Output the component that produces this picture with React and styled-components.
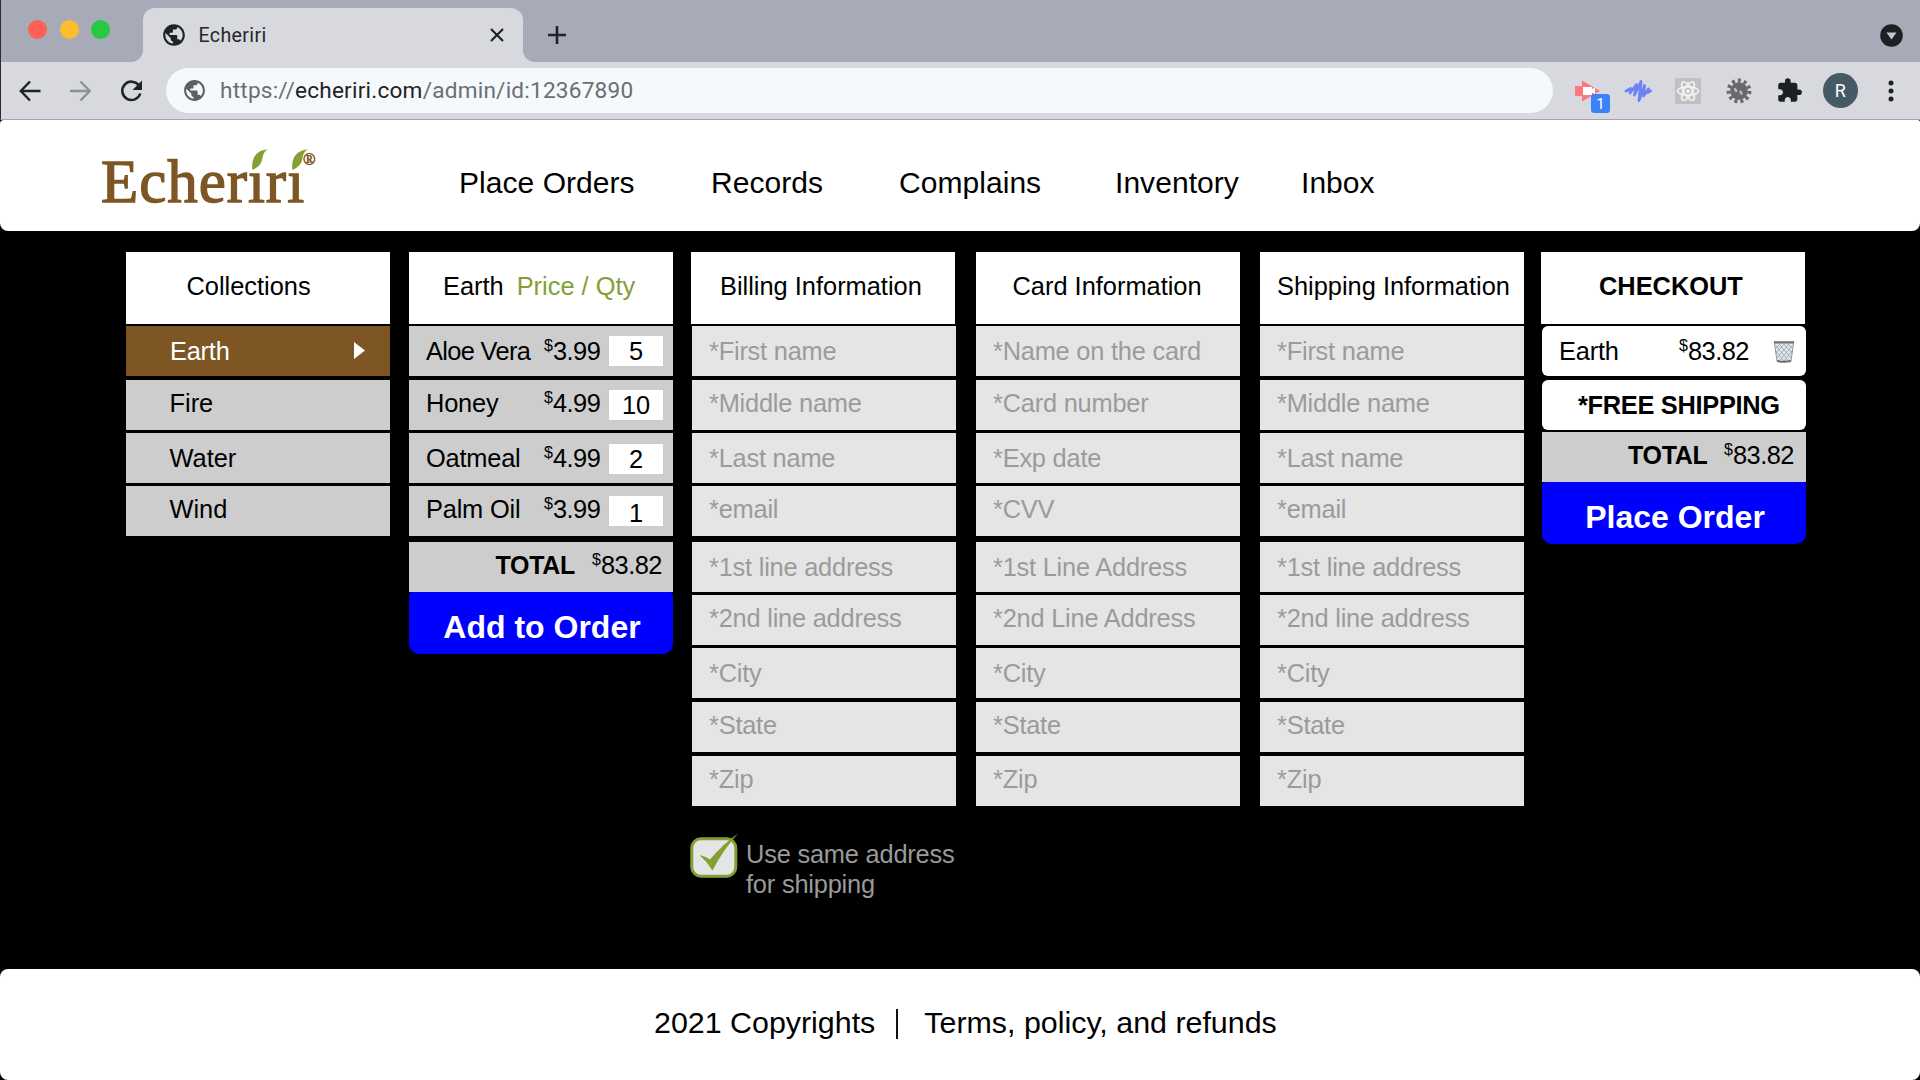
import React from "react";
import styled, { createGlobalStyle } from "styled-components";
import { MdPublic, MdExtension } from "react-icons/md";

const Global = createGlobalStyle`
  *, *::before, *::after { box-sizing: border-box; }
  html, body { margin: 0; background: #000; }
  body { font-family: "Liberation Sans", Arial, sans-serif; color: #000; overflow: hidden; }
`;

const Page = styled.div`
  width: 1920px;
  height: 1080px;
  display: flex;
  flex-direction: column;
  background: #000;
`;

/* Browser window */

const Browser = styled.header`
  flex: none;
  height: 120px;
  display: flex;
  flex-direction: column;
  font-family: Roboto, "Liberation Sans", sans-serif;
  background: #d7d9de;
  border-left: 1px solid #2b2c33;
  border-bottom: 1px solid #a3a5a9;
`;

const TabBar = styled.div`
  height: 62px;
  display: flex;
  align-items: flex-end;
  background: #a7aab7;
  padding: 0 17px 0 27px;
`;

const Lights = styled.div`
  display: flex;
  gap: 12.5px;
  width: 114.5px;
  padding-bottom: 23px;
`;

const Light = styled.span`
  width: 19px;
  height: 19px;
  border-radius: 50%;
  background: ${(p) => p.$color};
`;

const Tab = styled.div`
  position: relative;
  width: 380px;
  height: 54px;
  display: flex;
  align-items: center;
  gap: 12px;
  padding: 0 19px 0 18px;
  background: #d7d9de;
  border-radius: 12px 12px 0 0;
  &::before, &::after {
    content: "";
    position: absolute;
    bottom: 0;
    width: 12px;
    height: 12px;
  }
  &::before {
    left: -12px;
    background: radial-gradient(circle at 0 0, #a7aab7 11.5px, #d7d9de 12.5px);
  }
  &::after {
    right: -12px;
    background: radial-gradient(circle at 100% 0, #a7aab7 11.5px, #d7d9de 12.5px);
  }
`;

const TabTitle = styled.span`
  flex: 1;
  font-size: 19.6px;
  letter-spacing: 0.35px;
  color: #24272b;
`;

const NewTab = styled.div`
  height: 54px;
  margin-left: 24.5px;
  display: flex;
  align-items: center;
`;

const TabMenu = styled.div`
  height: 54px;
  margin-left: auto;
  display: flex;
  align-items: center;
`;

const Toolbar = styled.div`
  height: 57px;
  display: flex;
  align-items: center;
  padding-left: 17px;
`;

const NavButtons = styled.div`
  display: flex;
  gap: 26px;
  width: 148px;
`;

const Address = styled.div`
  flex: none;
  width: 1387px;
  height: 45px;
  display: flex;
  align-items: center;
  gap: 13px;
  padding-left: 16px;
  border-radius: 23px;
  background: #f5f9fc;
  color: #6a6e73;
`;

const Url = styled.span`
  font-size: 22.6px;
  letter-spacing: 0.22px;
  b { font-weight: 400; color: #1f2226; }
`;

const Extensions = styled.div`
  flex: 1;
  display: flex;
  align-items: center;
  padding-left: 9px;
`;

const Slot = styled.div`
  position: relative;
  flex: none;
  width: 50.6px;
  height: 40px;
  display: flex;
  align-items: center;
  justify-content: center;
`;

const Badge = styled.span`
  position: absolute;
  left: 29px;
  top: 23px;
  width: 19px;
  height: 19px;
  border-radius: 3px;
  background: #3b82f6;
  color: #fff;
  font-size: 15px;
  line-height: 20px;
  text-align: center;
`;

const Avatar = styled.span`
  width: 35px;
  height: 35px;
  border-radius: 50%;
  background: #455a64;
  color: #fff;
  font-size: 18px;
  line-height: 36px;
  text-align: center;
`;

/* Site header */

const SiteHeader = styled.div`
  flex: none;
  height: 111px;
  display: flex;
  background: #fff;
  border-radius: 4px 2px 8px 8px;
  padding: 0 0 0 101px;
`;

const Logo = styled.div`
  position: relative;
  width: 358px;
  padding-top: 27px;
  font-family: "Liberation Serif", "Times New Roman", serif;
  font-size: 61px;
  line-height: 70px;
  letter-spacing: 0.95px;
  color: #7e5624;
  -webkit-text-stroke: 1.3px #7e5624;
`;

const Leaf = styled.svg`
  position: absolute;
  left: ${(p) => p.$x}px;
  top: 29px;
`;

const Registered = styled.span`
  position: absolute;
  left: 202px;
  top: 31px;
  font-size: 16.5px;
  line-height: 18px;
  letter-spacing: 0;
  -webkit-text-stroke: 0.6px #7e5624;
`;

const Nav = styled.nav`
  display: flex;
  padding-top: 45px;
`;

const NavItem = styled.a`
  width: ${(p) => p.$w}px;
  font-size: 30px;
  line-height: 36px;
  letter-spacing: 0.05px;
  white-space: nowrap;
`;

/* Columns */

const Main = styled.main`
  flex: 1;
  display: flex;
  align-items: flex-start;
  padding: 21px 0 0 126px;
`;

const Column = styled.section`
  flex: none;
  width: 264px;
  margin-right: ${(p) => p.$gap || 0}px;
  display: flex;
  flex-direction: column;
  font-size: 25.4px;
  line-height: 30px;
  white-space: nowrap;
`;

const Head = styled.h2`
  margin: 0 ${(p) => p.$out || 0}px 2px -${(p) => p.$out || 0}px;
  height: 72px;
  padding: 19px 0 0 ${(p) => p.$x}px;
  background: #fff;
  font-size: 25.4px;
  line-height: 30px;
  font-weight: ${(p) => (p.$bold ? 700 : 400)};
  span { color: #84a034; margin-left: 13px; }
`;

const Row = styled.div`
  display: flex;
  align-items: flex-start;
  height: 50px;
  margin-bottom: ${(p) => p.$after ?? 3}px;
  padding: ${(p) => p.$drop || 10}px 0 0 ${(p) => p.$x || 17}px;
  background: ${(p) => p.$bg || "#cdcdcd"};
  color: ${(p) => p.$color || "#000"};
  border-radius: ${(p) => p.$round || 0}px;
  letter-spacing: ${(p) => p.$ls ?? -0.22}px;
  b { padding-top: 1px; }
`;

const Arrow = styled.svg`
  margin: 6px 25px 0 auto;
`;

const Name = styled.span`
  width: ${(p) => p.$w || 118}px;
  letter-spacing: ${(p) => p.$ls ?? -0.2}px;
`;

const Price = styled.span`
  display: flex;
  width: ${(p) => p.$w || 65}px;
  letter-spacing: -0.5px;
  sup {
    font-size: 16px;
    line-height: 20px;
    letter-spacing: 0;
  }
`;

const Qty = styled.span`
  width: 54px;
  height: 30px;
  margin-top: ${(p) => p.$top}px;
  padding-top: ${(p) => p.$pad}px;
  background: #fff;
  text-align: center;
`;

const Total = styled.strong`
  font-size: 25px;
  letter-spacing: -0.3px;
  width: ${(p) => p.$w}px;
`;

const Action = styled.button`
  height: 62px;
  border: 0;
  padding: 8px 0 0 2px;
  margin: 0;
  border-radius: 4px 4px 10px 10px;
  background: #0000fe;
  color: #fff;
  font: 700 32px/36px "Liberation Sans", Arial, sans-serif;
`;

const SameAddress = styled.label`
  display: flex;
  gap: 7px;
  margin: 26px 0 0 -2px;
  color: #9a9a9a;
  line-height: 30.4px;
  letter-spacing: -0.2px;
  svg { flex: none; }
  span { padding-top: 7px; }
`;

const Footer = styled.footer`
  flex: none;
  height: 111px;
  display: flex;
  padding: 35px 0 0 654px;
  background: #fff;
  border-radius: 8px;
  font-size: 30.4px;
  line-height: 36px;
`;

const Divider = styled.span`
  width: 2px;
  height: 30px;
  margin: 5px 26px 0 21px;
  background: #111;
`;

const TrashBox = styled.svg`
  margin-top: 3px;
`;

const leafPath = "M0.4 21 C-0.8 11 2.5 1.5 15.8 0.2 C11.8 2.6 11.2 5.5 10.2 10.5 C9.3 15 6 18.5 0.4 21 Z";

const items = [
  { name: "Aloe Vera", price: "3.99", qty: 5, drop: 10, top: 0, pad: 0, after: 4, ls: -0.65 },
  { name: "Honey", price: "4.99", qty: 10, drop: 8, top: 2, pad: 0, after: 3 },
  { name: "Oatmeal", price: "4.99", qty: 2, drop: 10, top: 1, pad: 0, after: 3 },
  { name: "Palm Oil", price: "3.99", qty: 1, drop: 8, top: 2, pad: 2, after: 6 },
];

const rowDrops = [10, 8, 10, 8, 10, 8, 10, 8, 8];
const rowGaps = [4, 3, 3, 6, 3, 3, 4, 4, 0];

const person = ["First name", "Middle name", "Last name", "email", "1st line address", "2nd line address", "City", "State", "Zip"];
const card = ["Name on the card", "Card number", "Exp date", "CVV", "1st Line Address", "2nd Line Address", "City", "State", "Zip"];

const Fields = ({ labels }) =>
  labels.map((label, i) => (
    <Row key={label} $bg="#e5e5e5" $color="#9b9b9b" $drop={rowDrops[i]} $after={rowGaps[i]}>
      *{label}
    </Row>
  ));

const Amount = ({ value, w }) => (
  <Price $w={w}>
    <sup>$</sup>
    {value}
  </Price>
);

const TrashIcon = () => (
  <TrashBox width="24" height="24" viewBox="0 0 24 24" fill="none">
    <path d="M2.5 4 L5 22 Q12 23.5 19 22 L21.5 4 Z" fill="#e3e8eb" stroke="#8b969d" strokeWidth="1" />
    <path d="M4 7 L17 22 M7 5 L19 19 M12 5 L20 14 M16 5 L21 10 M3.5 12 L12 22 M20 7 L7 22 M17 5 L5 19 M12 5 L4 14 M8 5 L3 10 M20 12 L12 22" stroke="#93a0a9" strokeWidth="0.8" />
    <path d="M1.8 3.2 H22.2 M5 22 Q12 23.5 19 22" stroke="#66717a" strokeWidth="2" />
  </TrashBox>
);

export default function App() {
  return (
    <Page>
      <Global />
      <Browser>
        <TabBar>
          <Lights>
            <Light $color="#ff5f57" />
            <Light $color="#febc2e" />
            <Light $color="#28c840" />
          </Lights>
          <Tab>
            <MdPublic size={26} color="#1f2226" />
            <TabTitle>Echeriri</TabTitle>
            <svg width="14" height="14" viewBox="0 0 14 14" stroke="#1f2226" strokeWidth="2.2">
              <path d="M1 1 L13 13 M13 1 L1 13" />
            </svg>
          </Tab>
          <NewTab>
            <svg width="20" height="20" viewBox="0 0 20 20" stroke="#1f2226" strokeWidth="2.6">
              <path d="M10 1 V19 M1 10 H19" />
            </svg>
          </NewTab>
          <TabMenu>
            <svg width="23" height="23" viewBox="0 0 23 23">
              <circle cx="11.5" cy="11.5" r="11.3" fill="#1d2023" />
              <path d="M6.5 8.5 H16.5 L11.5 15.5 Z" fill="#c3c5ce" />
            </svg>
          </TabMenu>
        </TabBar>
        <Toolbar>
          <NavButtons>
            <svg width="24" height="24" viewBox="0 0 24 24" fill="none" stroke="#1f2226" strokeWidth="2.4">
              <path d="M22.5 12 H3 M12 2.5 L2.8 12 L12 21.5" />
            </svg>
            <svg width="24" height="24" viewBox="0 0 24 24" fill="none" stroke="#8d9095" strokeWidth="2.4">
              <path d="M2 12 H21.5 M12.5 2.5 L21.7 12 L12.5 21.5" />
            </svg>
            <svg width="26" height="24" viewBox="0 0 26 24" fill="none">
              <path d="M21 6.5 A9.2 9.2 0 1 0 22.3 14.5" stroke="#1f2226" strokeWidth="2.5" />
              <path d="M24 1.5 V11 H14.5 Z" fill="#1f2226" />
            </svg>
          </NavButtons>
          <Address>
            <MdPublic size={25} color="#5b6066" />
            <Url>
              https://<b>echeriri.com</b>/admin/id:12367890
            </Url>
          </Address>
          <Extensions>
            <Slot>
              <svg width="26" height="22" viewBox="0 0 26 22">
                <path d="M1 6 H8 V0.5 L26 11 L8 21.5 V16 H1 Z" fill="#f9797c" />
                <path d="M9 7 H18 V9 L21 7.5 V14 L18 12.5 V15 H9 Z" fill="#fff" />
              </svg>
              <Badge>1</Badge>
            </Slot>
            <Slot>
              <svg width="28" height="24" viewBox="0 0 28 24" fill="none" stroke="#6b83f5" strokeWidth="2.8" strokeLinecap="round" strokeLinejoin="round">
                <path d="M2 12 L6.5 9.5 L6 14 L12.5 5.5 L10.5 16 L17 2.5 L15 21.5 L20.5 6.5 L19.5 17 L24.5 10 L23.5 13.5 L26.5 12" />
              </svg>
            </Slot>
            <Slot>
              <svg width="26" height="26" viewBox="0 0 26 26" fill="none" stroke="#f2f2f2" strokeWidth="1.7">
                <rect width="26" height="26" fill="#bfc0c1" stroke="none" />
                <ellipse cx="13" cy="13" rx="10.4" ry="4.2" />
                <ellipse cx="13" cy="13" rx="10.4" ry="4.2" transform="rotate(60 13 13)" />
                <ellipse cx="13" cy="13" rx="10.4" ry="4.2" transform="rotate(120 13 13)" />
                <circle cx="13" cy="13" r="2" fill="#f2f2f2" stroke="none" />
              </svg>
            </Slot>
            <Slot>
              <svg width="26" height="26" viewBox="0 0 26 26">
                <circle cx="13" cy="13" r="8.8" fill="#68696b" />
                <circle cx="13" cy="13" r="10.4" fill="none" stroke="#68696b" strokeWidth="4" strokeDasharray="3 2.94" />
                <ellipse cx="9.6" cy="12" rx="1.3" ry="2.4" fill="#b9bbbf" transform="rotate(-30 9.6 12)" />
                <ellipse cx="15" cy="14.6" rx="1.3" ry="2.4" fill="#b9bbbf" transform="rotate(-30 15 14.6)" />
              </svg>
            </Slot>
            <Slot>
              <MdExtension size={27} color="#1d2023" />
            </Slot>
            <Slot>
              <Avatar>R</Avatar>
            </Slot>
            <Slot>
              <svg width="6" height="22" viewBox="0 0 6 22" fill="#1d2023">
                <circle cx="3" cy="3" r="2.5" />
                <circle cx="3" cy="11" r="2.5" />
                <circle cx="3" cy="19" r="2.5" />
              </svg>
            </Slot>
          </Extensions>
        </Toolbar>
      </Browser>

      <SiteHeader>
        <Logo>
          Echerırı
          <Leaf $x={151} width="16" height="22" viewBox="0 0 16 22">
            <path d={leafPath} fill="#84a034" />
          </Leaf>
          <Leaf $x={191} width="16" height="22" viewBox="0 0 16 22">
            <path d={leafPath} fill="#84a034" />
          </Leaf>
          <Registered>®</Registered>
        </Logo>
        <Nav>
          <NavItem $w={252}>Place Orders</NavItem>
          <NavItem $w={188}>Records</NavItem>
          <NavItem $w={216}>Complains</NavItem>
          <NavItem $w={186}>Inventory</NavItem>
          <NavItem $w={100}>Inbox</NavItem>
        </Nav>
      </SiteHeader>

      <Main>
        <Column $gap={19}>
          <Head $x={60.5}>Collections</Head>
          <Row $x={44} $bg="#7e5624" $color="#fff" $after={4}>
            Earth
            <Arrow width="11" height="17" viewBox="0 0 11 17">
              <path d="M0 0 L11 8.5 L0 17 Z" fill="#fff" />
            </Arrow>
          </Row>
          <Row $x={43.5} $drop={8} $ls={0}>Fire</Row>
          <Row $x={43.5} $ls={0}>Water</Row>
          <Row $x={43.5} $drop={8} $ls={0}>Wind</Row>
        </Column>

        <Column $gap={19}>
          <Head $x={34}>
            Earth<span>Price / Qty</span>
          </Head>
          {items.map((it) => (
            <Row key={it.name} $drop={it.drop} $after={it.after}>
              <Name $ls={it.ls}>{it.name}</Name>
              <Amount value={it.price} />
              <Qty $top={it.top} $pad={it.pad}>{it.qty}</Qty>
            </Row>
          ))}
          <Row $x={86.5} $drop={8} $after={0}>
            <Total $w={96.5}>TOTAL</Total>
            <Amount value="83.82" w={80} />
          </Row>
          <Action>Add to Order</Action>
        </Column>

        <Column $gap={20}>
          <Head $x={29} $out={1}>Billing Information</Head>
          <Fields labels={person} />
          <SameAddress>
            <svg width="49" height="48" viewBox="0 0 49 48">
              <rect x="1.8" y="6.8" width="44" height="37.4" rx="9" fill="#e5e5e5" stroke="#84a034" strokeWidth="3" />
              <path d="M9.5 23 Q15.5 24 20 27.5 Q33 12 48 1.5 Q33 18 22.5 38.5 Q17 29.5 9.5 23 Z" fill="#84a034" />
            </svg>
            <span>
              Use same address
              <br />
              for shipping
            </span>
          </SameAddress>
        </Column>

        <Column $gap={20}>
          <Head $x={36.5}>Card Information</Head>
          <Fields labels={card} />
        </Column>

        <Column $gap={18}>
          <Head $x={17}>Shipping Information</Head>
          <Fields labels={person} />
        </Column>

        <Column>
          <Head $x={58} $out={1} $bold>CHECKOUT</Head>
          <Row $bg="#fff" $round={6} $after={4}>
            <Name $w={120}>Earth</Name>
            <Amount value="83.82" w={93} />
            <TrashIcon />
          </Row>
          <Row $bg="#fff" $round={6} $x={36} $drop={9} $after={2} $ls={-0.3}>
            <b>*FREE SHIPPING</b>
          </Row>
          <Row $x={86} $drop={8} $after={0}>
            <Total $w={96}>TOTAL</Total>
            <Amount value="83.82" w={80} />
          </Row>
          <Action>Place Order</Action>
        </Column>
      </Main>

      <Footer>
        <span>2021 Copyrights</span>
        <Divider />
        <span>Terms, policy, and refunds</span>
      </Footer>
    </Page>
  );
}
